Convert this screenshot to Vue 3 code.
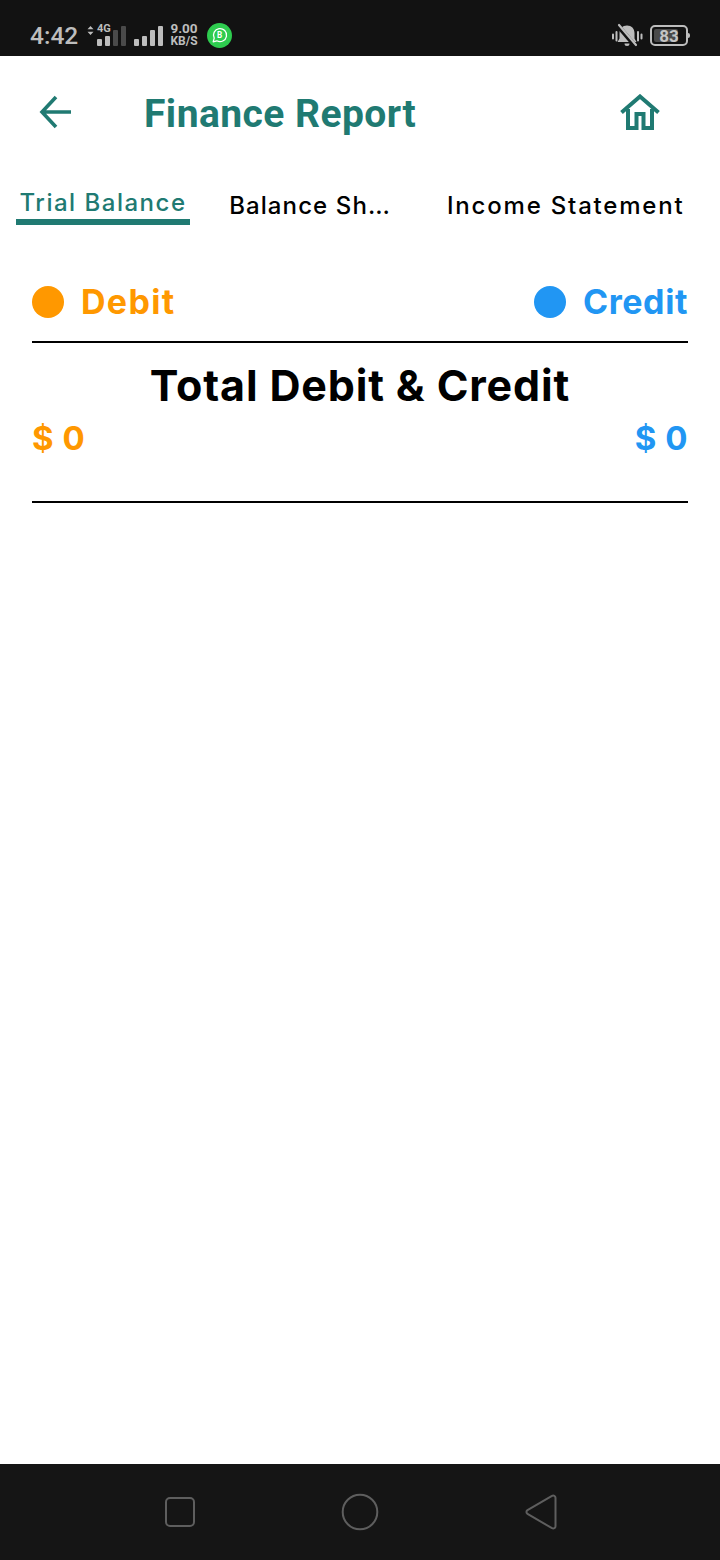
<template>
  <div class="screen">
    <!-- Status bar -->
    <div class="status-bar">
      <div class="status-left">
        <span class="clock">4:42</span>
        <svg class="updown" width="7" height="9" viewBox="0 0 7 9">
          <path d="M3.500 0 6.500 3.200H.5zM3.500 9 .5 5.800h6z" fill="#bdbdbd" />
        </svg>
        <div class="net">
          <span class="net-label">4G</span>
          <div class="bars">
            <i class="on" style="height: 7px"></i>
            <i class="on" style="height: 10px"></i>
          </div>
        </div>
        <div class="bars dim-pair">
          <i class="dim" style="height: 16px"></i>
          <i class="dim" style="height: 20px"></i>
        </div>
        <div class="bars">
          <i class="on" style="height: 7px"></i>
          <i class="on" style="height: 10px"></i>
          <i class="on" style="height: 16px"></i>
          <i class="on" style="height: 20px"></i>
        </div>
        <div class="speed">
          <span>9.00</span>
          <span>KB/S</span>
        </div>
        <svg class="wa" width="25" height="25" viewBox="0 0 26 26">
          <circle cx="13" cy="13" r="13" fill="#2ecc4f" />
          <path d="M6.400 19.600 7.500 15.700A6.800 6.800 0 1 1 10.200 18.500z" fill="none" stroke="#fff" stroke-width="1.300" stroke-linejoin="round" />
          <text x="13" y="15.800" class="wa-b" text-anchor="middle">B</text>
        </svg>
      </div>
      <div class="status-right">
        <svg width="32" height="26" viewBox="0 0 32 26">
          <path d="M16 2.500c-4.500 0-7.500 3-7.500 7.500v5.500l-2 3.500h19l-2-3.500V10c0-4.500-3-7.500-7.500-7.500zM13.500 20.500a2.500 2.500 0 0 0 5 0z" fill="#bdbdbd" />
          <path d="M8 4 25 24" stroke="#121212" stroke-width="4.500" />
          <path d="M8 2 25 22" stroke="#bdbdbd" stroke-width="2.200" stroke-linecap="round" />
          <path d="M2 11.500v4M5.500 9v8.500M27 9v8.500M30.500 11.500v4" stroke="#bdbdbd" stroke-width="2" stroke-linecap="round" />
        </svg>
        <div class="battery">
          <div class="battery-body">
            <span class="battery-fill"></span>
            <span class="battery-num">83</span>
          </div>
          <span class="battery-tip"></span>
        </div>
      </div>
    </div>

    <!-- Header -->
    <header class="header">
      <svg class="back" width="36" height="34" viewBox="0 0 36 34">
        <path d="M34 17H5M19 2 5 17 19 32" fill="none" stroke="#207a72" stroke-width="3.600" />
      </svg>
      <h1 class="title">Finance Report</h1>
      <svg class="home" width="40" height="36" viewBox="0 0 40 36">
        <path d="M1.500 18.500 20 2.500 38.500 18.500M8 15v19h8.500V20h7v14H32V15" fill="none" stroke="#207a72" stroke-width="4" />
      </svg>
    </header>

    <!-- Tabs -->
    <nav class="tabs">
      <div v-for="tab in tabs" :key="tab.label" class="tab" :class="[tab.cls, { active: tab.active }]">
        <span>{{ tab.label }}</span>
      </div>
    </nav>

    <!-- Report -->
    <main class="report">
      <div class="legend">
        <div class="legend-item debit"><span class="dot"></span>Debit</div>
        <div class="legend-item credit"><span class="dot"></span>Credit</div>
      </div>
      <div class="totals">
        <h2>Total Debit &amp; Credit</h2>
        <div class="amounts">
          <span class="debit">$ {{ debit }}</span>
          <span class="credit">$ {{ credit }}</span>
        </div>
      </div>
    </main>

    <!-- Navigation bar -->
    <footer class="nav-bar">
      <svg width="30" height="30" viewBox="0 0 30 30">
        <rect x="1" y="1" width="28" height="28" rx="4" fill="none" stroke="#5e5e5e" stroke-width="2" />
      </svg>
      <svg width="38" height="38" viewBox="0 0 38 38">
        <circle cx="19" cy="19" r="17.300" fill="none" stroke="#5e5e5e" stroke-width="2" />
      </svg>
      <svg width="32" height="36" viewBox="0 0 32 36">
        <path d="M2.500 16.200 27 1.800c1.600-.9 3.500.2 3.500 2v28.400c0 1.800-1.900 2.900-3.500 2L2.500 19.800c-1.400-.8-1.400-2.800 0-3.600z" fill="none" stroke="#5e5e5e" stroke-width="2" />
      </svg>
    </footer>
  </div>
</template>

<script setup>
const debit = 0
const credit = 0

const tabs = [
  { label: 'Trial Balance', cls: 'tab-trial', active: true },
  { label: 'Balance Sh…', cls: 'tab-sheet', active: false },
  { label: 'Income Statement', cls: 'tab-income', active: false }
]
</script>

<style>
html,
body {
  margin: 0;
  background: #fff;
}
</style>

<style scoped>
.screen {
  width: 720px;
  height: 1560px;
  display: flex;
  flex-direction: column;
  background: #fff;
  font-family: Inter, "Liberation Sans", sans-serif;
  overflow: hidden;
}

/* Status bar */
.status-bar {
  height: 56px;
  flex-shrink: 0;
  box-sizing: border-box;
  padding: 15px 30px 0;
  display: flex;
  justify-content: space-between;
  background: #121212;
  color: #bdbdbd;
  font-family: Roboto, sans-serif;
}

.status-left {
  display: flex;
  align-items: flex-end;
  padding-bottom: 10px;
}

.status-right {
  display: flex;
  align-items: center;
}

.clock {
  width: 57px;
  font-size: 24.500px;
  font-weight: 500;
  line-height: 26px;
  margin-bottom: -3px;
  white-space: nowrap;
}

.updown {
  margin: 0 3px 11px 0;
}

.net {
  display: flex;
  flex-direction: column;
  width: 13px;
  margin-right: 3px;
}

.net-label {
  font-size: 11px;
  font-weight: 700;
  line-height: 10px;
  margin-bottom: 2px;
  white-space: nowrap;
}

.bars {
  display: flex;
  align-items: flex-end;
  gap: 3px;
}

.bars i {
  display: block;
  width: 5px;
  border-radius: 1px;
}

.bars .on {
  background: #bdbdbd;
}

.bars .dim {
  background: #4a4a4a;
}

.dim-pair {
  margin-right: 8px;
}

.speed {
  display: flex;
  flex-direction: column;
  align-items: center;
  width: 28px;
  margin: 0 0 -1px 7px;
  font-size: 12px;
  font-weight: 700;
  line-height: 12px;
}

.speed span:first-child {
  font-size: 13.500px;
  line-height: 13px;
}

.wa {
  margin: 0 0 -2px 9px;
}

.wa-b {
  font-family: Roboto, sans-serif;
  font-size: 8.500px;
  font-weight: 700;
  fill: #fff;
}

.battery {
  display: flex;
  align-items: center;
  margin-left: 7px;
}

.battery-body {
  position: relative;
  width: 38px;
  height: 21px;
  box-sizing: border-box;
  border: 2px solid #bdbdbd;
  border-radius: 5px;
  display: flex;
  align-items: center;
  justify-content: center;
}

.battery-fill {
  position: absolute;
  left: 2px;
  top: 2px;
  bottom: 2px;
  width: 24px;
  background: #4a4a4a;
  border-radius: 2px;
}

.battery-num {
  position: relative;
  font-size: 17px;
  font-weight: 700;
  color: #c4c4c4;
}

.battery-tip {
  width: 2px;
  height: 5px;
  background: #bdbdbd;
  border-radius: 0 2px 2px 0;
}

/* Header */
.header {
  height: 112px;
  flex-shrink: 0;
  display: flex;
  align-items: center;
  padding: 0 60px 0 37px;
}

.back {
  flex-shrink: 0;
}

.title {
  margin: 3px 0 0 71px;
  flex: 1;
  font-family: Roboto, sans-serif;
  font-size: 39px;
  font-weight: 700;
  letter-spacing: 0.450px;
  color: #207a72;
  white-space: nowrap;
}

.home {
  flex-shrink: 0;
}

/* Tabs */
.tabs {
  height: 60px;
  flex-shrink: 0;
  display: flex;
  font-size: 24px;
  font-weight: 500;
  letter-spacing: 1.500px;
  color: #000;
}

.tab {
  display: flex;
  justify-content: center;
  white-space: nowrap;
  box-sizing: border-box;
  padding-top: 23px;
}

.tab-trial {
  margin-left: 16px;
  width: 174px;
  padding-top: 20px;
}

.tab-sheet {
  margin-left: 38px;
  width: 164px;
  letter-spacing: 1.100px;
}

.tab-income {
  margin-left: 55px;
  letter-spacing: 1.800px;
}

.tab.active {
  height: 57px;
  color: #207a72;
  border-bottom: 6px solid #207a72;
}

/* Report */
.report {
  flex: 1;
  padding: 0 32px;
}

.legend {
  height: 115px;
  box-sizing: border-box;
  padding-top: 54px;
  display: flex;
  justify-content: space-between;
  border-bottom: 2px solid #000;
}

.legend-item {
  display: flex;
  align-items: flex-start;
  font-size: 34px;
  font-weight: 700;
  line-height: 40px;
}

.legend-item.debit {
  letter-spacing: 1.300px;
}

.legend-item.credit {
  letter-spacing: 0.600px;
}

.dot {
  width: 32px;
  height: 32px;
  border-radius: 50%;
  margin: 4px 17px 0 0;
}

.debit {
  color: #ff9800;
}

.credit {
  color: #2196f3;
}

.debit .dot {
  background: #ff9800;
}

.credit .dot {
  background: #2196f3;
}

.totals {
  height: 160px;
  box-sizing: border-box;
  border-bottom: 2px solid #000;
}

.totals h2 {
  margin: 0;
  padding-top: 17px;
  text-align: center;
  font-size: 43px;
  letter-spacing: 0.850px;
  line-height: 50px;
  font-weight: 700;
  color: #000;
}

.amounts {
  margin-top: 8px;
  display: flex;
  justify-content: space-between;
  font-size: 33px;
  font-weight: 700;
  letter-spacing: 0.500px;
  line-height: 40px;
}

/* Navigation bar */
.nav-bar {
  height: 96px;
  flex-shrink: 0;
  box-sizing: border-box;
  padding-left: 165px;
  display: flex;
  align-items: center;
  gap: 146px;
  background: #151515;
}
</style>
